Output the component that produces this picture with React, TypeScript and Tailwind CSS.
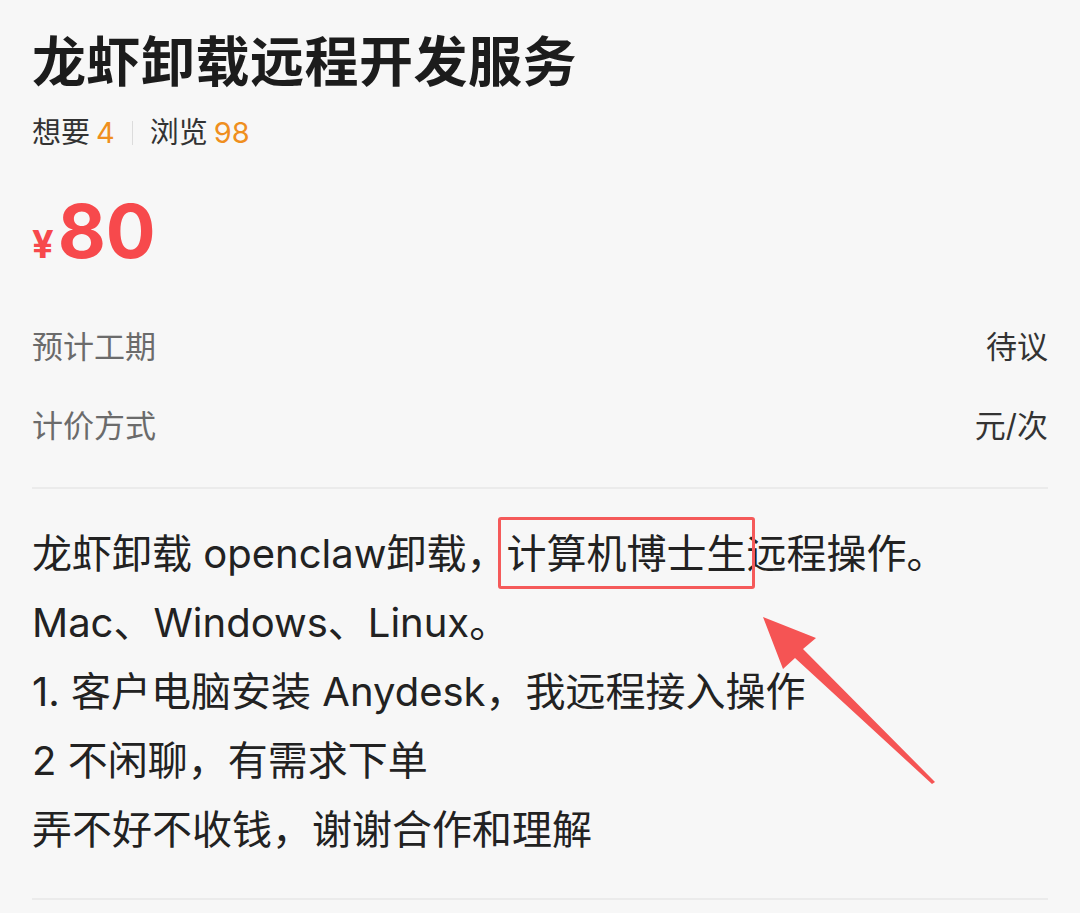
import React from 'react';

const font = 'font-[Inter,"Noto_Sans_CJK_SC",sans-serif]';

const InfoRow: React.FC<{ label: string; value: string; className?: string }> = ({ label, value, className }) => (
  <div className={`flex items-center justify-between ${className ?? ''}`}>
    <span className="text-[31px] leading-[40px] text-[#6b6b6b]">{label}</span>
    <span className="text-[31px] leading-[40px] text-[#333]">{value}</span>
  </div>
);

const App: React.FC = () => {
  return (
    <div className={`relative min-h-[913px] w-[1080px] overflow-hidden bg-[#f7f7f7] px-8 pt-[33px] ${font}`}>
      <h1 className="text-[54px] leading-[60px] font-bold text-[#1c1c1c] tracking-[0.5px]">龙虾卸载远程开发服务</h1>

      <div className="mt-5 flex items-center text-[29px] leading-[40px] text-[#333]">
        <span>想要</span>
        <span className="ml-[6px] text-[#ef8f1e]">4</span>
        <span className="mx-[17px] h-[24px] w-px bg-[#dcdcdc]" />
        <span>浏览</span>
        <span className="ml-[6px] text-[#ef8f1e]">98</span>
      </div>

      <div className="mt-[38px] flex items-baseline font-bold text-[#f7494c] leading-[80px]">
        <span className="text-[38px] mr-[4px]">¥</span>
        <span className="text-[74px]">80</span>
      </div>

      <InfoRow className="mt-[43px]" label="预计工期" value="待议" />
      <InfoRow className="mt-[39px]" label="计价方式" value="元/次" />

      <div className="mt-[41px] h-[2px] bg-[#ebebeb]" />

      <div className="mt-[30px] text-[40px] leading-[69px] text-[#222]">
        <p>
          龙虾卸载 openclaw卸载，
          <span className="relative inline-block">
            计算机博士生
            <span className="absolute -left-[8px] -right-[9px] -top-[2px] -bottom-[1px] rounded-[3px] border-[3px] border-[#f55a5a]" />
          </span>
          远程操作。
        </p>
        <p>Mac、Windows、Linux。</p>
        <p>1. 客户电脑安装 Anydesk，我远程接入操作</p>
        <p>2 不闲聊，有需求下单</p>
        <p>弄不好不收钱，谢谢合作和理解</p>
      </div>

      <div className="mt-[34px] h-[2px] bg-[#ebebeb]" />

      <svg className="pointer-events-none absolute left-0 top-0" width="1080" height="913" viewBox="0 0 1080 913">
        <polygon
          points="763,617 816,638 803,649 935,782 932,784 795,658 783,669"
          fill="#f55454"
        />
      </svg>
    </div>
  );
};

export default App;
